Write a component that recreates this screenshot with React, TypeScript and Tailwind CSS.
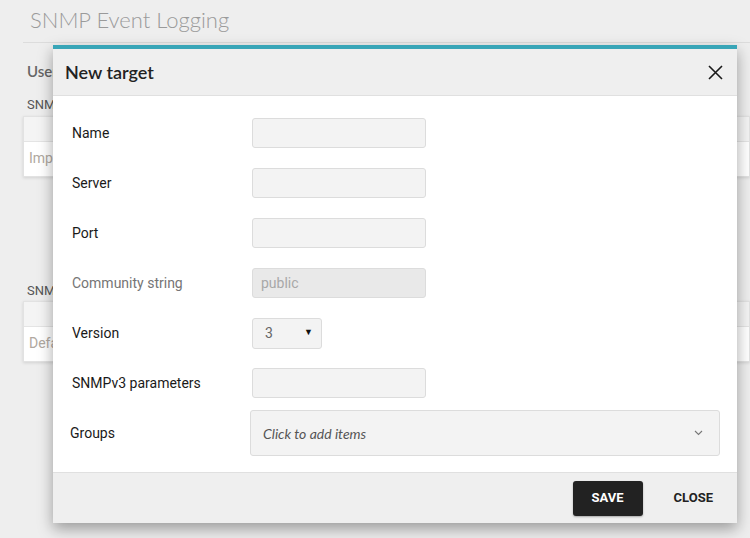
import React from "react";

const labelCls = "text-[14px] font-normal text-[#1a1a1a]";
const inputCls =
  "w-[174px] h-[30px] bg-[#f3f3f3] border border-[#dcdcdc] rounded-[3px] px-2 text-[14px] outline-none";

function Row({ label, children, muted }: { label: string; children: React.ReactNode; muted?: boolean }) {
  return (
    <div className="flex items-center h-[50px]">
      <div className={`w-[180px] ${muted ? "text-[14px] font-normal text-[#757575]" : labelCls}`}>{label}</div>
      {children}
    </div>
  );
}

function BgCard({ text }: { text: string }) {
  return (
    <div className="ml-[23px] bg-white border border-[#e2e2e2] shadow-[0_1px_3px_rgba(0,0,0,0.12)]">
      <div className="h-[25px] bg-[#f4f4f4] border-b border-[#e4e4e4]"></div>
      <div className="h-[34px] flex items-center pl-[5px] text-[14px] text-[#b0a8a0]">{text}</div>
    </div>
  );
}

export default function App() {
  return (
    <div
      className="relative w-[750px] h-[538px] overflow-hidden bg-[#eeeeee]"
      style={{ fontFamily: "Roboto, 'Noto Sans', sans-serif" }}
    >
      {/* Page behind the dialog */}
      <div className="pt-[6px]">
        <h1 className="pl-[30px] text-[22px] font-light text-[#9a9a9a] leading-[28px]" style={{ fontFamily: "Lato, sans-serif" }}>
          SNMP Event Logging
        </h1>
        <div className="ml-[23px] mt-[8px] border-t border-[#dcdcdc]"></div>
        <div className="pl-[27px] mt-[17px] text-[15px] font-semibold text-[#666]" style={{ fontFamily: "Lato, sans-serif" }}>
          User targets
        </div>
        <div className="pl-[27px] mt-[14px] text-[13px] text-[#555] leading-[15px]">SNMP targets</div>
        <div className="mt-[4px]">
          <BgCard text="Import" />
        </div>
        <div className="pl-[27px] mt-[106px] text-[13px] text-[#555] leading-[15px]">SNMP defaults</div>
        <div className="mt-[3px]">
          <BgCard text="Default" />
        </div>
      </div>

      {/* Dialog */}
      <div className="absolute left-[53px] top-[45px] w-[684px] bg-white border-t-[4px] border-[#38a5b7] shadow-[0_6px_14px_rgba(0,0,0,0.35)]">
        <div className="h-[47px] bg-[#efefef] border-b border-[#e0e0e0] flex items-center justify-between pl-[12px] pr-[14px]">
          <div className="text-[18px] font-semibold text-[#222]" style={{ fontFamily: "Lato, sans-serif" }}>
            New target
          </div>
          <svg width="15" height="15" viewBox="0 0 15 15" className="mt-[1px]">
            <path d="M1 1 L14 14 M14 1 L1 14" stroke="#1a1a1a" strokeWidth="1.6" />
          </svg>
        </div>

        <div className="pl-[19px] pr-[17px] pt-[12px] pb-[14px]">
          <Row label="Name">
            <input className={inputCls} />
          </Row>
          <Row label="Server">
            <input className={inputCls} />
          </Row>
          <Row label="Port">
            <input className={inputCls} />
          </Row>
          <Row label="Community string" muted>
            <div className="w-[174px] h-[30px] bg-[#e9e9e9] border border-[#dcdcdc] rounded-[3px] px-2 flex items-center text-[14px] text-[#a8a8a8]">
              public
            </div>
          </Row>
          <Row label="Version">
            <div className="w-[70px] h-[31px] bg-[#f3f3f3] border border-[#dcdcdc] rounded-[3px] flex items-center justify-between pl-[12px] pr-[8px] text-[14px] text-[#666]">
              <span>3</span>
              <span className="text-[9px] text-[#111]">▼</span>
            </div>
          </Row>
          <Row label="SNMPv3 parameters">
            <input className={inputCls} />
          </Row>
          <div className="flex items-center h-[50px] -ml-[2px]">
            <div className={`w-[180px] ${labelCls}`}>Groups</div>
            <div className="flex-1 h-[46px] bg-[#f3f3f3] border border-[#dcdcdc] rounded-[3px] flex items-center justify-between pl-[12px] pr-[16px]">
              <span className="italic text-[14px] text-[#555]" style={{ fontFamily: "Lato, sans-serif" }}>
                Click to add items
              </span>
              <svg width="9" height="6" viewBox="0 0 9 6">
                <path d="M1 1 L4.5 4.5 L8 1" stroke="#777" strokeWidth="1.1" fill="none" />
              </svg>
            </div>
          </div>
        </div>

        <div className="h-[51px] bg-[#efefef] border-t border-[#e0e0e0] flex items-center justify-end pr-[24px]">
          <button className="w-[70px] h-[35px] bg-[#222] text-white rounded-[3px] text-[13px] font-bold shadow-[0_1px_2px_rgba(0,0,0,0.3)]">
            SAVE
          </button>
          <button className="ml-[31px] text-[13px] font-bold text-[#222]">CLOSE</button>
        </div>
      </div>
    </div>
  );
}
